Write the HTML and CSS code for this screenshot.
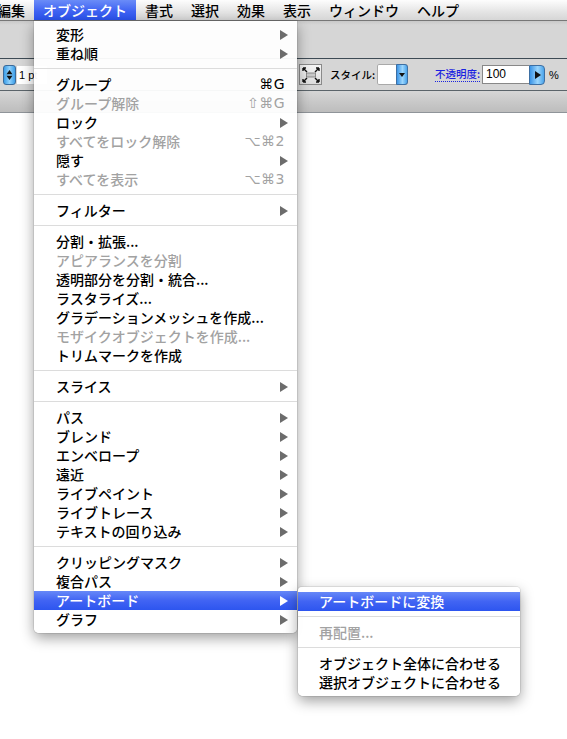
FILE: index.html
```html
<!DOCTYPE html>
<html lang="ja">
<head>
<meta charset="utf-8">
<title>Object menu</title>
<link rel="stylesheet" href="styles.css">
</head>
<body>
<div class="screen">
  <div class="menubar">
    <span class="mb-item first">編集</span>
    <span class="mb-item active">オブジェクト</span>
    <span class="mb-item">書式</span>
    <span class="mb-item">選択</span>
    <span class="mb-item">効果</span>
    <span class="mb-item">表示</span>
    <span class="mb-item">ウィンドウ</span>
    <span class="mb-item">ヘルプ</span>
  </div>
  <div class="toolbar">
    <div class="row1"></div>
    <div class="rule"></div>
    <div class="row2">
      <div class="stroke-ctl">
        <span class="stepper">
          <svg width="13" height="20" viewBox="0 0 13 20"><path d="M6.5 4 L10 9 L3 9 Z" fill="#111"/><path d="M6.5 16 L10 11 L3 11 Z" fill="#111"/></svg>
        </span>
        <span class="pt-field">1 pt</span>
      </div>
      <div class="right-ctls">
        <span class="fit-btn">
          <svg width="20" height="18" viewBox="0 0 20 18">
            <rect x="5.5" y="7" width="9" height="4" fill="#c8c8c8" stroke="#777" stroke-width="0.8"/>
            <path d="M2 2 L6 6 M2 2 L2 5 M2 2 L5 2" stroke="#111" stroke-width="1.4" fill="none"/>
            <path d="M18 2 L14 6 M18 2 L18 5 M18 2 L15 2" stroke="#111" stroke-width="1.4" fill="none"/>
            <path d="M2 16 L6 12 M2 16 L2 13 M2 16 L5 16" stroke="#111" stroke-width="1.4" fill="none"/>
            <path d="M18 16 L14 12 M18 16 L18 13 M18 16 L15 16" stroke="#111" stroke-width="1.4" fill="none"/>
          </svg>
        </span>
        <span class="lbl style-lbl">スタイル:</span>
        <span class="style-box"><span class="blue-btn down"><svg width="6" height="6" viewBox="0 0 6 6"><path d="M0 1 L6 1 L3 5 Z" fill="#111"/></svg></span></span>
        <span class="lbl link">不透明度:</span>
        <span class="opacity-field">100</span>
        <span class="blue-btn right"><svg width="7" height="8" viewBox="0 0 7 8"><path d="M1 0 L7 4 L1 8 Z" fill="#111"/></svg></span>
        <span class="pct">%</span>
      </div>
    </div>
    <div class="rule light"></div>
    <div class="band"></div>
    <div class="rule thin"></div>
  </div>

  <div class="menu main">
    <div class="mi"><span>変形</span><i class="arrow"></i></div>
    <div class="mi"><span>重ね順</span><i class="arrow"></i></div>
    <div class="sep"></div>
    <div class="mi"><span>グループ</span><span class="sc">⌘G</span></div>
    <div class="mi off"><span>グループ解除</span><span class="sc">⇧⌘G</span></div>
    <div class="mi"><span>ロック</span><i class="arrow"></i></div>
    <div class="mi off"><span>すべてをロック解除</span><span class="sc">⌥⌘2</span></div>
    <div class="mi"><span>隠す</span><i class="arrow"></i></div>
    <div class="mi off"><span>すべてを表示</span><span class="sc">⌥⌘3</span></div>
    <div class="sep"></div>
    <div class="mi"><span>フィルター</span><i class="arrow"></i></div>
    <div class="sep"></div>
    <div class="mi"><span>分割・拡張...</span></div>
    <div class="mi off"><span>アピアランスを分割</span></div>
    <div class="mi"><span>透明部分を分割・統合...</span></div>
    <div class="mi"><span>ラスタライズ...</span></div>
    <div class="mi"><span>グラデーションメッシュを作成...</span></div>
    <div class="mi off"><span>モザイクオブジェクトを作成...</span></div>
    <div class="mi"><span>トリムマークを作成</span></div>
    <div class="sep"></div>
    <div class="mi"><span>スライス</span><i class="arrow"></i></div>
    <div class="sep"></div>
    <div class="mi"><span>パス</span><i class="arrow"></i></div>
    <div class="mi"><span>ブレンド</span><i class="arrow"></i></div>
    <div class="mi"><span>エンベロープ</span><i class="arrow"></i></div>
    <div class="mi"><span>遠近</span><i class="arrow"></i></div>
    <div class="mi"><span>ライブペイント</span><i class="arrow"></i></div>
    <div class="mi"><span>ライブトレース</span><i class="arrow"></i></div>
    <div class="mi"><span>テキストの回り込み</span><i class="arrow"></i></div>
    <div class="sep"></div>
    <div class="mi"><span>クリッピングマスク</span><i class="arrow"></i></div>
    <div class="mi"><span>複合パス</span><i class="arrow"></i></div>
    <div class="mi hl"><span>アートボード</span><i class="arrow"></i></div>
    <div class="mi"><span>グラフ</span><i class="arrow"></i></div>
  </div>

  <div class="menu sub">
    <div class="mi hl"><span>アートボードに変換</span></div>
    <div class="sep"></div>
    <div class="mi off"><span>再配置...</span></div>
    <div class="sep"></div>
    <div class="mi"><span>オブジェクト全体に合わせる</span></div>
    <div class="mi"><span>選択オブジェクトに合わせる</span></div>
  </div>
</div>
</body>
</html>
```

FILE: styles.css
```css
html, body {
  margin: 0;
  padding: 0;
  background: #fff;
}

.screen {
  position: relative;
  width: 567px;
  height: 739px;
  overflow: hidden;
  font-family: "Noto Sans CJK JP", "DejaVu Sans", sans-serif;
  color: #000;
}

.menubar {
  display: flex;
  height: 21px;
  background: linear-gradient(#fdfdfd, #e4e4e4 60%, #d6d6d6);
  border-bottom: 1px solid #777;
  box-sizing: border-box;
  font-size: 14px;
  line-height: 21px;
  font-weight: 500;
}

.mb-item {
  padding: 0 9px;
  white-space: nowrap;
}

.mb-item.first {
  margin-left: -12px;
}

.mb-item.active {
  color: #fff;
  background: linear-gradient(#6a8cf8, #3f63f2 55%, #2a52ee);
}

.toolbar {
  display: flex;
  flex-direction: column;
}

.row1 {
  height: 37px;
  background: linear-gradient(#c8c8c8, #d6d6d6 4px, #d6d6d6);
}

.rule {
  height: 1px;
  background: #3e4b55;
}

.rule.light {
  background: #5b646a;
}

.rule.thin {
  background: #8f9499;
}

.row2 {
  height: 31px;
  background: #d6d6d6;
  display: flex;
  align-items: center;
}

.stroke-ctl {
  display: flex;
  align-items: center;
  padding-left: 3px;
}

.stepper {
  width: 13px;
  height: 20px;
  border-radius: 3px;
  background: linear-gradient(90deg, #3c9ee8, #8fd0fb 50%, #3c9ee8);
  border: 1px solid #3a6a9a;
  box-sizing: border-box;
  display: flex;
  align-items: center;
  justify-content: center;
}

.stepper svg {
  display: block;
}

.pt-field {
  width: 30px;
  height: 18px;
  background: #fff;
  margin-left: 1px;
  font-family: "Liberation Sans", sans-serif;
  font-size: 11px;
  line-height: 18px;
  padding-left: 2px;
  box-sizing: border-box;
}

.right-ctls {
  display: flex;
  align-items: center;
  margin-left: 252px;
  height: 100%;
}

.fit-btn {
  width: 23px;
  height: 21px;
  box-sizing: border-box;
  border: 1px solid #8a8a8a;
  background: linear-gradient(#f4f4f4, #dcdcdc);
  display: flex;
  align-items: center;
  justify-content: center;
  margin-right: 8px;
}

.fit-btn svg {
  display: block;
}

.lbl {
  font-size: 10.5px;
  line-height: 14px;
  white-space: nowrap;
  font-weight: 500;
}

.style-lbl {
  width: 45px;
}

.lbl.link {
  color: #1a22e0;
  border-bottom: 1px dotted #1a22e0;
  margin-left: 27px;
  margin-right: 2px;
  width: 45px;
}

.style-box {
  width: 31px;
  height: 21px;
  background: #fff;
  margin-left: 2px;
  display: flex;
  justify-content: flex-end;
  border-radius: 2px;
  box-shadow: inset 0 0 0 1px #a9a9a9;
  overflow: hidden;
}

.blue-btn {
  display: flex;
  align-items: center;
  justify-content: center;
  background: linear-gradient(90deg, #3b94e6, #9bd6fd 55%, #4aa3ea);
  border: 1px solid #3d6fa3;
  box-sizing: border-box;
}

.blue-btn.down {
  width: 12px;
  height: 21px;
  border-radius: 0 3px 3px 0;
}

.blue-btn.right {
  width: 16px;
  height: 20px;
  border-radius: 0 4px 4px 0;
}

.blue-btn svg {
  display: block;
}

.opacity-field {
  width: 47px;
  height: 19px;
  background: #fff;
  box-sizing: border-box;
  border: 1px solid #888;
  border-right: none;
  font-family: "Liberation Sans", sans-serif;
  font-size: 12px;
  line-height: 17px;
  padding-left: 3px;
}

.pct {
  font-family: "Liberation Sans", sans-serif;
  font-size: 11px;
  margin-left: 4px;
}

.band {
  height: 21px;
  background: linear-gradient(#d6d6d6, #c9c9c9 50%, #bdbdbd);
}

/* menus */
.menu {
  position: absolute;
  background: rgba(255, 255, 255, 0.95);
  box-shadow: 0 5px 14px rgba(0, 0, 0, 0.38), 0 0 0 1px rgba(0, 0, 0, 0.08);
  font-size: 14px;
  font-weight: 500;
}

.menu.main {
  left: 34px;
  top: 21px;
  width: 263px;
  padding: 4px 0 4px;
  border-radius: 0 0 5px 5px;
}

.menu.sub {
  left: 298px;
  top: 587px;
  width: 222px;
  padding: 5px 0 4px;
  border-radius: 4px 4px 5px 5px;
}

.mi {
  display: flex;
  align-items: center;
  justify-content: space-between;
  height: 19px;
  line-height: 19px;
  padding: 0 9px 0 22px;
  white-space: nowrap;
}

.sub .mi {
  padding-left: 21px;
}

.mi.off {
  color: #a2a2a2;
}

.mi.hl {
  color: #fff;
  background: linear-gradient(#6688f8, #4164f3 50%, #2d55ef);
}

.sc {
  font-family: "DejaVu Sans", sans-serif;
  font-size: 14px;
  margin-right: 3px;
  letter-spacing: 0.5px;
}

.arrow {
  width: 0;
  height: 0;
  border-left: 8px solid #6c6c6c;
  border-top: 5px solid transparent;
  border-bottom: 5px solid transparent;
}

.mi.hl .arrow {
  border-left-color: #fff;
}

.sep {
  height: 1px;
  margin: 5px 0 6px;
  background: #dcdcdc;
}
```
